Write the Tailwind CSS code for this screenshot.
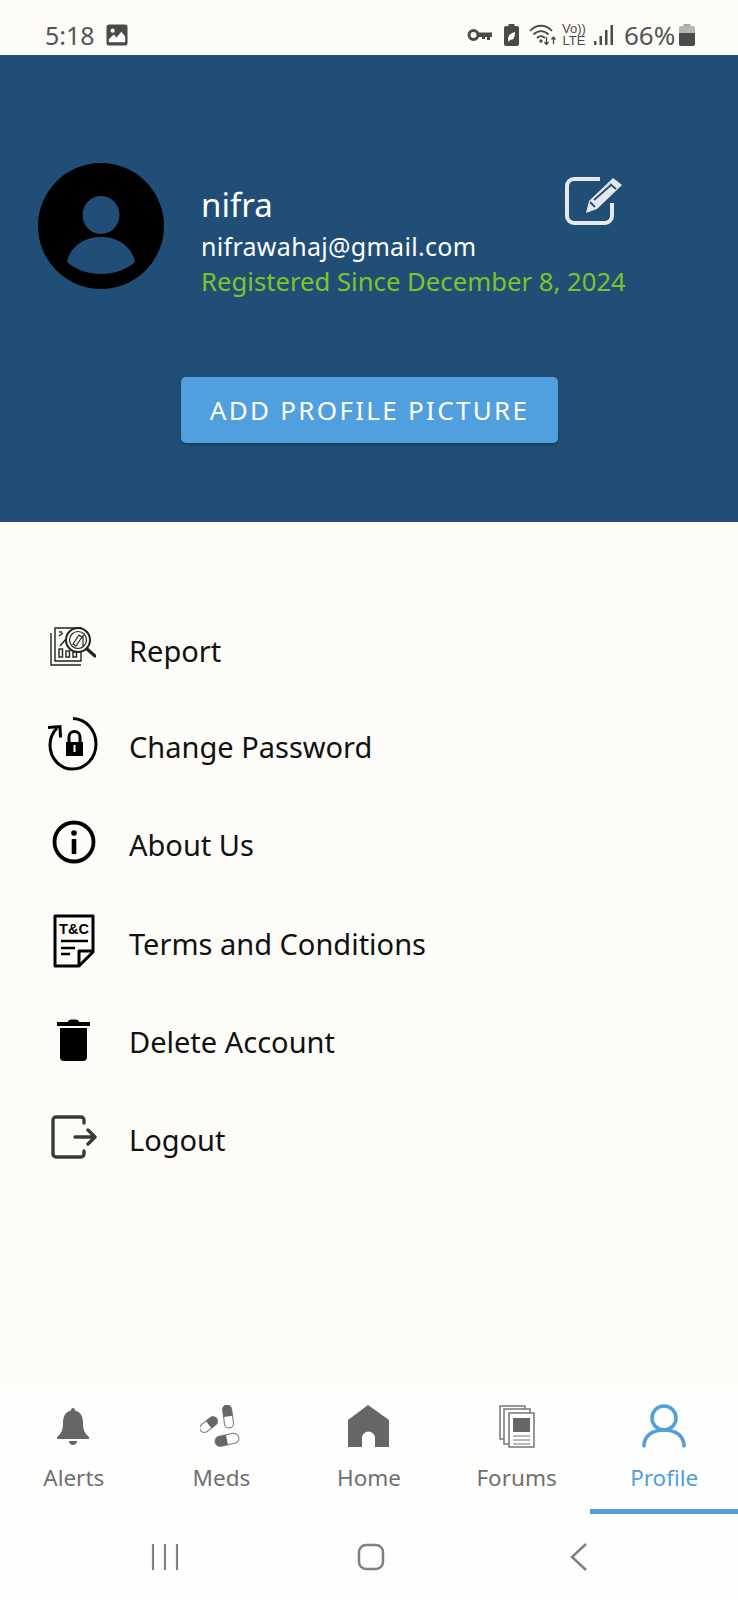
<!doctype html>
<html><head><meta charset="utf-8">
<script src="https://cdn.jsdelivr.net/npm/@tailwindcss/browser@4"></script>
</head>
<body class="m-0">
<div class="w-[738px] h-[1600px] overflow-hidden flex flex-col bg-[#fdfcf9] font-['Noto_Sans','Open_Sans',sans-serif]">

<!-- status bar -->
<div class="h-[55px] shrink-0 flex items-center pl-[45px] pt-[15px] text-[#555555] relative">
  <span class="text-[25px] leading-[40px] w-[61px]">5:18</span>
  <svg class="w-[22px] h-[22px]" viewBox="0 0 23 23"><rect width="22" height="22" x="0.5" y="0.5" rx="3" fill="#4a4a4a"/><path d="M3 19v-3l5-5 3 3 5-6 4 5v6z" fill="#fff"/><circle cx="7" cy="7" r="2.2" fill="#fff"/></svg>
  <div class="ml-auto flex items-center pr-[43px]">
    <svg class="w-[26px] h-[14px]" viewBox="0 0 26 14" fill="none"><circle cx="6.5" cy="7" r="4.5" stroke="#4a4a4a" stroke-width="3"/><path d="M11 4.500h14v4.500h-2v3h-3v-3h-2v2h-3v-2h-4z" fill="#4a4a4a"/></svg>
    <svg class="w-[15px] h-[22px] ml-[11px]" viewBox="0 0 15 22"><rect x="4.500" y="0" width="6" height="3" fill="#4a4a4a"/><rect x="0" y="2" width="15" height="20" rx="2" fill="#4a4a4a"/><path d="M4 16c0-5 3-7 7-8 0 5-1 8-5 8l-1 2z" fill="#fff"/></svg>
    <svg class="w-[28px] h-[22px] ml-[10px]" viewBox="0 0 28 22" fill="none" stroke="#4a4a4a" stroke-width="1.800"><path d="M1 7C7 0 17 0 23 7"/><path d="M4.500 10.500C9 6 15 6 19.500 10.500"/><path d="M8 14c2.500-2.500 5.500-2.500 8 0"/><circle cx="12" cy="17" r="0.800" fill="#4a4a4a"/><path d="M17.500 13v7M15.500 18l2 2.500 2-2.500M24.500 20v-7M22.500 15.500l2-2.500 2 2.500" stroke-width="1.300"/></svg>
    <div class="w-[22px] h-[24px] ml-[6px] flex flex-col items-center text-[#4a4a4a] text-[13px] leading-[12px] font-['Liberation_Sans',sans-serif]"><span>Vo))</span><span>LTE</span></div>
    <svg class="w-[20px] h-[20px] ml-[9px]" viewBox="0 0 20 20" fill="#4a4a4a"><rect x="0" y="16" width="2.500" height="4"/><rect x="5.500" y="11" width="2.500" height="9"/><rect x="11" y="5" width="2.500" height="15"/><rect x="16.500" y="0" width="2.500" height="20"/></svg>
    <span class="text-[26px] leading-[30px] ml-[10px] w-[55px]">66%</span>
    <svg class="w-[16px] h-[22px]" viewBox="0 0 16 22"><rect x="4.500" y="0" width="7" height="3" fill="#a8a8a8"/><rect x="0" y="2" width="16" height="20" rx="2" fill="#b4b4b4"/><path d="M0 9h16v11a2 2 0 0 1-2 2H2a2 2 0 0 1-2-2z" fill="#4a4a4a"/></svg>
  </div>
</div>

<!-- header -->
<div class="h-[467px] shrink-0 bg-[#204e77] flex flex-col text-white">
  <div class="flex pl-[38px] pr-[112px] pt-[108px]">
    <svg class="w-[126px] h-[126px] shrink-0" viewBox="0 0 126 126"><circle cx="63" cy="63" r="63" fill="#000"/><ellipse cx="63" cy="52" rx="18.500" ry="19" fill="#204e77"/><path d="M29 99c3-15 16-25 34-25s31 10 34 25c-9 8-21 12-34 12s-25-4-34-12z" fill="#204e77"/></svg>
    <div class="ml-[37px] mt-[21px] flex-1 relative">
      <div class="text-[33px] leading-[42px]">nifra</div>
      <div class="text-[25px] leading-[36px] mt-[2px] tracking-[0.3px]">nifrawahaj@gmail.com</div>
      <div class="text-[25.700px] leading-[36px] text-[#7cc528] whitespace-nowrap">Registered Since December 8, 2024</div>
      <svg class="absolute right-[2px] top-[-8px] w-[60px] h-[50px]" viewBox="0 0 60 50" fill="none"><path d="M36 3H10a7 7 0 0 0-7 7v30a7 7 0 0 0 7 7h31a7 7 0 0 0 7-7V27" stroke="#e6e9ec" stroke-width="4"/><path d="M49 2l9 7-25 24-11 4 3-12z" fill="#e6e9ec"/><path d="M46 8l6 5M26 26l5 5M30 24L47 9" stroke="#204e77" stroke-width="1.800"/></svg>
    </div>
  </div>
  <button class="ml-[181px] mt-[77px] w-[377px] h-[66px] rounded-[5px] bg-[#529fdf] shadow-[0_2px_3px_rgba(0,0,0,0.25)] text-[26px] leading-[66px] tracking-[2.3px] text-white text-center">ADD PROFILE PICTURE</button>
</div>

<!-- menu -->
<div class="flex-1 pt-[82px] text-[#111111] text-[29px]">
  <div class="h-[94px] flex items-center pl-[50px]">
    <div class="w-[79px] shrink-0 mb-[9px]">
      <svg class="w-[46px] h-[39px]" viewBox="0 0 46 39" fill="none" stroke="#222" stroke-width="1.400"><path d="M1 6v32h30"/><path d="M5 1h26v33H5z" fill="#fdfcf9"/><path d="M9 5h3M9 9l4-3M10 19l6-7"/><rect x="9" y="22" width="3.500" height="8"/><rect x="16" y="24" width="3.500" height="6"/><rect x="23" y="25" width="3.500" height="5"/><circle cx="28" cy="13" r="12" fill="#fdfcf9" stroke-width="2"/><circle cx="28" cy="13" r="8.500" stroke-width="1.200"/><path d="M23 17l6-9 3 2-6 9zM33 8v11" stroke-width="1.200"/><path d="M37 22l8 7" stroke-width="3.200" stroke-linecap="round"/></svg>
    </div>
    <span>Report</span>
  </div>
  <div class="h-[98px] flex items-center pl-[48px]">
    <div class="w-[81px] shrink-0 mb-[7px]">
      <svg class="w-[50px] h-[54px]" viewBox="0 0 50 54" fill="none"><path d="M25 1.500C38 2 48 13 48 27c0 14-10.500 25-23.500 25S2 41 2 28c0-6 2-12 7-17" stroke="#000" stroke-width="3"/><path d="M0 10.500l12-1 .5 11" stroke="#000" stroke-width="3"/><rect x="18" y="25" width="17" height="14" fill="#000"/><path d="M21 26v-6a5.500 5.500 0 0 1 11 0v6" stroke="#000" stroke-width="3"/><rect x="25.500" y="28" width="2" height="7" fill="#fff"/></svg>
    </div>
    <span>Change Password</span>
  </div>
  <div class="h-[98px] flex items-center pl-[52px]">
    <div class="w-[77px] shrink-0 mb-[6px]">
      <svg class="w-[44px] h-[44px]" viewBox="0 0 44 44" fill="none"><circle cx="22" cy="22" r="19.500" stroke="#000" stroke-width="3.800"/><circle cx="22" cy="13" r="2.800" fill="#000"/><rect x="19.700" y="19" width="4.600" height="15" fill="#000"/></svg>
    </div>
    <span>About Us</span>
  </div>
  <div class="h-[99px] flex items-center pl-[53px]">
    <div class="w-[76px] shrink-0 mb-[6px]">
      <svg class="w-[42px] h-[54px]" viewBox="0 0 42 54" fill="none"><path d="M2 2h38v36L26 52H2z" stroke="#000" stroke-width="3" stroke-linejoin="round"/><path d="M40 37H26v15" stroke="#000" stroke-width="3" stroke-linejoin="round"/><text x="21" y="20" text-anchor="middle" font-family="Liberation Sans" font-weight="700" font-size="14.500" fill="#000">T&amp;C</text><path d="M8 27h27M8 34h14M8 40h9" stroke="#000" stroke-width="2.500"/></svg>
    </div>
    <span>Terms and Conditions</span>
  </div>
  <div class="h-[98px] flex items-center pl-[57px]">
    <div class="w-[72px] shrink-0 mb-[5px]">
      <svg class="w-[33px] h-[42px]" viewBox="0 0 33 42"><path d="M11 3c0-2 2-2.500 5.500-2.500S22 1 22 3h11v4H0V3z" fill="#000"/><path d="M3 9h27v29a4 4 0 0 1-4 4H7a4 4 0 0 1-4-4z" fill="#000"/></svg>
    </div>
    <span>Delete Account</span>
  </div>
  <div class="h-[98px] flex items-center pl-[51px]">
    <div class="w-[78px] shrink-0 mb-[6px]">
      <svg class="w-[46px] h-[44px]" viewBox="0 0 46 44" fill="none" stroke="#3a3a3a" stroke-width="3.400" stroke-linecap="round" stroke-linejoin="round"><path d="M33 8V5a3 3 0 0 0-3-3H5a3 3 0 0 0-3 3v34a3 3 0 0 0 3 3h25a3 3 0 0 0 3-3v-3"/><path d="M24 22h20M37 15l7 7-7 7"/></svg>
    </div>
    <span>Logout</span>
  </div>
</div>

<!-- bottom nav -->
<div class="h-[216px] shrink-0 bg-[#fefefd] flex flex-col">
  <div class="h-[132px] grid grid-cols-5 text-[22.500px] text-[#707070]">
    <div class="flex flex-col items-center pt-[20px] relative">
      <div class="h-[44px] flex items-center mr-[2px]"><svg class="w-[32px] h-[37px]" viewBox="0 0 32 37" fill="#666"><path d="M16 0c1.500 0 2 1 2 2.500C24 4 26 9 26 15c0 7 2 11 6 14v2H0v-2c4-3 6-7 6-14C6 9 8 4 14 2.500 14 1 14.500 0 16 0z"/><path d="M12 33h8c0 2.500-2 4-4 4s-4-1.500-4-4z"/></svg></div>
      <span class="leading-[32px] mt-[14px]">Alerts</span>
    </div>
    <div class="flex flex-col items-center pt-[20px]">
      <div class="h-[44px] flex items-center"><svg class="w-[42px] h-[42px]" viewBox="0 0 42 42" fill="none"><g transform="rotate(-38 9 20)"><rect x="-1" y="15" width="20" height="9" rx="4.500" stroke="#888" stroke-width="1.200" fill="#fff"/><path d="M9 15h5.500a4.500 4.500 0 0 1 0 9H9z" fill="#666"/></g><g transform="rotate(-8 28 11)"><rect x="23.500" y="0" width="9" height="23" rx="4.500" stroke="#888" stroke-width="1.200" fill="#fff"/><path d="M23.500 11.500V4.500a4.500 4.500 0 0 1 9 0v7z" fill="#666"/></g><g transform="rotate(-12 26 35)"><rect x="15" y="30" width="24" height="10" rx="5" stroke="#888" stroke-width="1.200" fill="#fff"/><path d="M27 30h-7a5 5 0 0 0 0 10h7z" fill="#666"/></g></svg></div>
      <span class="leading-[32px] mt-[14px]">Meds</span>
    </div>
    <div class="flex flex-col items-center pt-[20px]">
      <div class="h-[44px] flex items-center"><svg class="w-[41px] h-[42px]" viewBox="0 0 41 42" fill="#666"><path d="M20 0L41 15v27H27V33a6.500 6.500 0 0 0-13 0v9H0V15z"/></svg></div>
      <span class="leading-[32px] mt-[14px]">Home</span>
    </div>
    <div class="flex flex-col items-center pt-[20px]">
      <div class="h-[44px] flex items-center"><svg class="w-[36px] h-[43px]" viewBox="0 0 36 43" fill="#fff" stroke="#777" stroke-width="1.500"><rect x="1" y="1" width="25" height="33"/><rect x="5" y="4" width="26" height="35"/><rect x="10" y="8" width="25" height="34"/><rect x="14" y="13" width="17" height="14" fill="#666" stroke="none"/><path d="M14 31h17M14 35h17M14 39h17" stroke-width="1.200"/></svg></div>
      <span class="leading-[32px] mt-[14px]">Forums</span>
    </div>
    <div class="flex flex-col items-center pt-[20px] text-[#529fdc] relative">
      <div class="h-[44px] flex items-center"><svg class="w-[44px] h-[44px]" viewBox="0 0 44 44" fill="none" stroke="#529fdc" stroke-width="3.600" stroke-linecap="round"><circle cx="22" cy="14" r="12"/><path d="M2 42c0-10 8-16 20-16s20 6 20 16"/></svg></div>
      <span class="leading-[32px] mt-[14px]">Profile</span>
      <div class="absolute left-0 right-0 bottom-[2px] h-[5px] bg-[#529fdc]"></div>
    </div>
  </div>
  <!-- system nav -->
  <div class="flex-1 relative flex items-center">
    <div class="w-[246px] flex justify-center pb-[2px]"><svg class="w-[28px] h-[28px] ml-[84px]" viewBox="0 0 28 28" stroke="#808080" stroke-width="2.200"><path d="M2 1v26M14 1v26M26 1v26"/></svg></div>
    <div class="w-[246px] flex justify-center pb-[2px]"><svg class="w-[28px] h-[28px] ml-[4px]" viewBox="0 0 28 28" fill="none" stroke="#808080" stroke-width="2.500"><rect x="2" y="2" width="24" height="24" rx="7"/></svg></div>
    <div class="w-[246px] flex justify-center pb-[2px]"><svg class="w-[18px] h-[28px] ml-[-72px]" viewBox="0 0 18 28" fill="none" stroke="#808080" stroke-width="2.500"><path d="M16 1L2 14l14 13"/></svg></div>
  </div>
</div>
</div>
</body></html>
